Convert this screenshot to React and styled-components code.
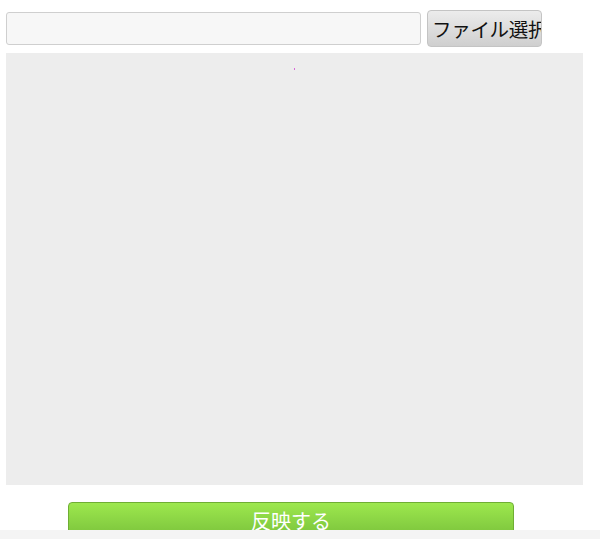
import React from 'react';
import styled, { createGlobalStyle } from 'styled-components';

const GlobalStyle = createGlobalStyle`
  html, body {
    margin: 0;
    padding: 0;
    background: #fff;
    font-family: "Noto Sans CJK JP", "Liberation Sans", sans-serif;
  }
`;

const Page = styled.div`
  height: 539px;
  display: flex;
  flex-direction: column;
`;

const Main = styled.div`
  height: 530px;
  overflow: hidden;
  padding: 10px 0 0 6px;
  box-sizing: border-box;
`;

const FileRow = styled.div`
  display: flex;
  align-items: flex-start;
  gap: 6px;
`;

const PathInput = styled.input`
  width: 415px;
  height: 33px;
  margin-top: 2px;
  box-sizing: border-box;
  background: #f7f7f7;
  border: 1px solid #cfcfcf;
  border-radius: 3px;
  outline: none;
`;

const PickButton = styled.button`
  width: 115px;
  height: 37px;
  padding: 0 0 0 4px;
  box-sizing: border-box;
  overflow: hidden;
  white-space: nowrap;
  text-align: left;
  font-family: "Noto Sans CJK JP", sans-serif;
  font-size: 19.5px;
  letter-spacing: -0.3px;
  line-height: 34px;
  color: #111;
  background: linear-gradient(#ececec, #cfcfcf);
  border: 1px solid #c4c4c4;
  border-radius: 4px;
`;

const Canvas = styled.div`
  margin-top: 6px;
  width: 577px;
  height: 432px;
  background: #ededed;
  display: flex;
  justify-content: center;
`;

const Dot = styled.span`
  width: 1px;
  height: 2px;
  margin-top: 15px;
  background: #d86ad8;
`;

const ApplyButton = styled.button`
  display: block;
  margin: 17px 0 0 62px;
  width: 446px;
  height: 38px;
  box-sizing: border-box;
  padding: 0;
  font-family: "Noto Sans CJK JP", sans-serif;
  font-size: 20px;
  line-height: 30px;
  color: #fff;
  text-align: center;
  background: linear-gradient(#9de84e, #78c03a);
  border: 1px solid #6fae34;
  border-radius: 4px;
`;

const Footer = styled.div`
  height: 9px;
  background: #f4f4f4;
`;

export default function App() {
  return (
    <Page>
      <GlobalStyle />
      <Main>
        <FileRow>
          <PathInput readOnly />
          <PickButton>ファイル選択</PickButton>
        </FileRow>
        <Canvas>
          <Dot />
        </Canvas>
        <ApplyButton>反映する</ApplyButton>
      </Main>
      <Footer />
    </Page>
  );
}
